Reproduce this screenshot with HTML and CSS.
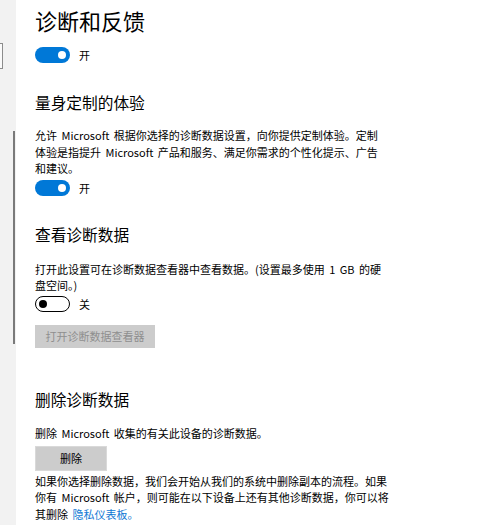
FILE: index.html
```html
<!DOCTYPE html>
<html lang="zh-CN">
<head>
<meta charset="utf-8">
<link rel="stylesheet" href="styles.css">
</head>
<body>
<div class="page">
  <aside class="sidebar">
    <div class="nav-box"></div>
    <div class="scroll-line"></div>
  </aside>
  <main class="content">
    <h1 class="title">诊断和反馈</h1>
    <div class="toggle-row r1">
      <span class="toggle on"><span class="knob"></span></span>
      <span class="toggle-label">开</span>
    </div>

    <h2 class="subheader s1">量身定制的体验</h2>
    <p class="para p1">允许 Microsoft 根据你选择的诊断数据设置，向你提供定制体验。定制<br>体验是指提升 Microsoft 产品和服务、满足你需求的个性化提示、广告<br>和建议。</p>
    <div class="toggle-row r2">
      <span class="toggle on"><span class="knob"></span></span>
      <span class="toggle-label">开</span>
    </div>

    <h2 class="subheader s2">查看诊断数据</h2>
    <p class="para p2">打开此设置可在诊断数据查看器中查看数据。(设置最多使用 1 GB 的硬<br>盘空间。)</p>
    <div class="toggle-row r3">
      <span class="toggle off"><span class="knob"></span></span>
      <span class="toggle-label">关</span>
    </div>
    <button class="btn btn-disabled">打开诊断数据查看器</button>

    <h2 class="subheader s3">删除诊断数据</h2>
    <p class="para p3">删除 Microsoft 收集的有关此设备的诊断数据。</p>
    <button class="btn btn-delete">删除</button>
    <p class="para p4">如果你选择删除数据，我们会开始从我们的系统中删除副本的流程。如果<br>你有 Microsoft 帐户，则可能在以下设备上还有其他诊断数据，你可以将<br>其删除 <a class="link" href="#">隐私仪表板。</a></p>
  </main>
</div>
</body>
</html>
```

FILE: styles.css
```css
html, body {
  margin: 0;
  padding: 0;
  background: #ffffff;
}
body {
  font-family: "Noto Sans CJK SC", "Noto Sans", sans-serif;
  color: #000;
  width: 482px;
  height: 525px;
  overflow: hidden;
}
.page {
  display: flex;
  height: 525px;
}
.sidebar {
  width: 16px;
  flex: 0 0 16px;
  background: #f2f2f2;
  display: flex;
  flex-direction: column;
  align-items: flex-start;
}
.nav-box {
  margin-top: 43px;
  width: 2px;
  height: 24px;
  border: 1px solid #8c8c8c;
  border-left: none;
  background: #fafafa;
}
.scroll-line {
  margin-top: 62px;
  margin-left: 13px;
  width: 2px;
  height: 213px;
  background: #7a7a7a;
}
.content {
  padding: 5px 0 0 19px;
  flex: 1;
}
.title {
  margin: 0;
  font-size: 22px;
  line-height: 30px;
  font-weight: 400;
}
.subheader {
  margin: 0;
  font-size: 15.7px;
  line-height: 22px;
  font-weight: 400;
}
.para {
  margin: 0;
  max-width: 420px;
  font-size: 11px;
  line-height: 16.6px;
  word-spacing: 2px;
  white-space: nowrap;
}
.toggle-row {
  display: flex;
  align-items: center;
  height: 16px;
}
.toggle {
  box-sizing: border-box;
  width: 35px;
  height: 16px;
  border-radius: 8px;
  display: flex;
  align-items: center;
  padding: 0 4px;
}
.toggle .knob {
  width: 8px;
  height: 8px;
  border-radius: 50%;
}
.toggle.on {
  background: #0078d7;
  justify-content: flex-end;
}
.toggle.on .knob {
  background: #fff;
}
.toggle.off {
  border: 1.6px solid #000;
  background: #fff;
  justify-content: flex-start;
  padding: 0 2.5px;
}
.toggle.off .knob {
  background: #000;
}
.toggle-label {
  margin-left: 9px;
  font-size: 11px;
  line-height: 16px;
}
.r1 { margin-top: 12px; }
.s1 { margin-top: 29px; }
.p1 { margin-top: 13px; }
.r2 { margin-top: 3px; }
.s2 { margin-top: 28px; }
.p2 { margin-top: 15px; }
.r3 { margin-top: 2px; }
.btn {
  display: block;
  font-family: "Noto Sans CJK SC", "Noto Sans", sans-serif;
  font-size: 11px;
  border: none;
  padding: 0;
  margin: 0;
  background: #cccccc;
}
.btn-disabled {
  margin-top: 13px;
  width: 120px;
  height: 23px;
  color: #8f8f8f;
}
.s3 { margin-top: 41px; }
.p3 { margin-top: 14px; }
.btn-delete {
  margin-top: 4px;
  width: 72px;
  height: 25px;
  color: #000;
  border: 1px solid #d9d9d9;
  box-sizing: border-box;
}
.p4 { margin-top: 2px; }
.link {
  color: #0f78d4;
  text-decoration: none;
}
```
